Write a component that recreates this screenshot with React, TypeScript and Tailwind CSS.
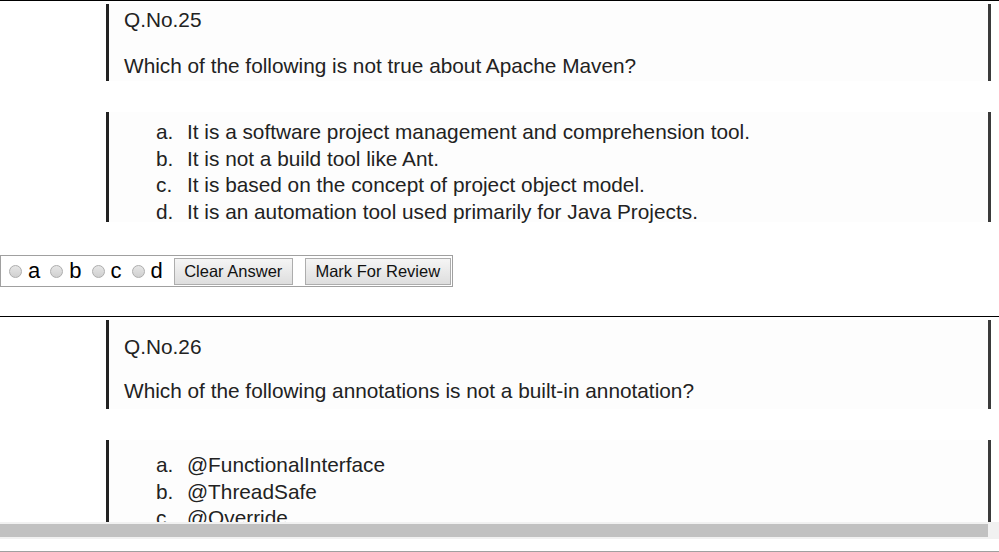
import React from "react";

const font = { fontFamily: '"Liberation Sans", Arial, sans-serif' };

function Radio() {
  return (
    <span className="inline-block w-[13px] h-[13px] rounded-full border border-[#adadad] bg-gradient-to-b from-[#e6e6e6] to-[#d0d0d0] shrink-0" />
  );
}

function Options({ items, pt }: { items: string[]; pt: string }) {
  const letters = ["a.", "b.", "c.", "d."];
  return (
    <div className={`${pt} pl-[47px] text-[20.8px] leading-[26.6px] text-[#222]`}>
      {items.map((t, i) => (
        <div key={i} className="flex whitespace-nowrap">
          <span className="w-[31px] shrink-0">{letters[i]}</span>
          <span>{t}</span>
        </div>
      ))}
    </div>
  );
}

export default function App() {
  return (
    <div className="w-[999px] h-[552px] bg-white overflow-hidden relative" style={font}>
      <div className="h-[522px] overflow-hidden">
        <div className="h-px bg-black" />
        {/* Q25 header */}
        <div className="mt-[3px] ml-[106px] w-[885px] h-[77px] border-l-[3px] border-r-[3px] border-l-[#222] border-r-[#3a3a3a] bg-[#fdfdfd] pl-[15px] pt-[5px] text-[20.8px] leading-[21px] text-[#222]">
          <div>Q.No.25</div>
          <div className="mt-[25px]">Which of the following is not true about Apache Maven?</div>
        </div>
        {/* Q25 options */}
        <div className="mt-[31px] ml-[106px] w-[885px] h-[110px] border-l-[3px] border-r-[3px] border-l-[#222] border-r-[#3a3a3a] bg-[#fdfdfd]">
          <Options
            pt="pt-[7px]"
            items={[
              "It is a software project management and comprehension tool.",
              "It is not a build tool like Ant.",
              "It is based on the concept of project object model.",
              "It is an automation tool used primarily for Java Projects.",
            ]}
          />
        </div>
        {/* answer row */}
        <div className="mt-[33px] inline-flex items-center h-[32px] border border-[#a0a0a0] pl-[8px] pr-px">
          <Radio />
          <span className="ml-[6px] text-[22px] leading-none text-black">a</span>
          <span className="ml-[10px] flex"><Radio /></span>
          <span className="ml-[6px] text-[22px] leading-none text-black">b</span>
          <span className="ml-[10px] flex"><Radio /></span>
          <span className="ml-[6px] text-[22px] leading-none text-black">c</span>
          <span className="ml-[10px] flex"><Radio /></span>
          <span className="ml-[6px] text-[22px] leading-none text-black">d</span>
          <button className="ml-[11px] h-[27px] w-[119px] border border-[#adadad] bg-gradient-to-b from-[#f5f5f5] to-[#dedede] text-[16.5px] text-[#111] leading-none">
            Clear Answer
          </button>
          <button className="ml-[12px] h-[27px] w-[146px] border border-[#adadad] bg-gradient-to-b from-[#f5f5f5] to-[#dedede] text-[16.5px] text-[#111] leading-none">
            Mark For Review
          </button>
        </div>
        <div className="mt-[29px] h-px bg-black" />
        {/* Q26 header */}
        <div className="mt-[3px] ml-[106px] w-[885px] h-[89px] border-l-[3px] border-r-[3px] border-l-[#222] border-r-[#3a3a3a] bg-[#fdfdfd] pl-[15px] pt-[16px] text-[20.8px] leading-[21px] text-[#222]">
          <div>Q.No.26</div>
          <div className="mt-[23px]">Which of the following annotations is not a built-in annotation?</div>
        </div>
        {/* Q26 options */}
        <div className="mt-[31px] ml-[106px] w-[885px] h-[110px] border-l-[3px] border-r-[3px] border-l-[#222] border-r-[#3a3a3a] bg-[#fdfdfd]">
          <Options
            pt="pt-[12px]"
            items={["@FunctionalInterface", "@ThreadSafe", "@Override", "@Deprecated"]}
          />
        </div>
      </div>
      {/* horizontal scrollbar */}
      <div className="h-[17px] bg-[#f1f1f1] pt-[2px] flex">
        <div className="w-[988px] h-[13px] bg-[#c1c1c1]" />
      </div>
      <div className="mt-[12px] h-px bg-[#a0a0a0]" />
    </div>
  );
}
